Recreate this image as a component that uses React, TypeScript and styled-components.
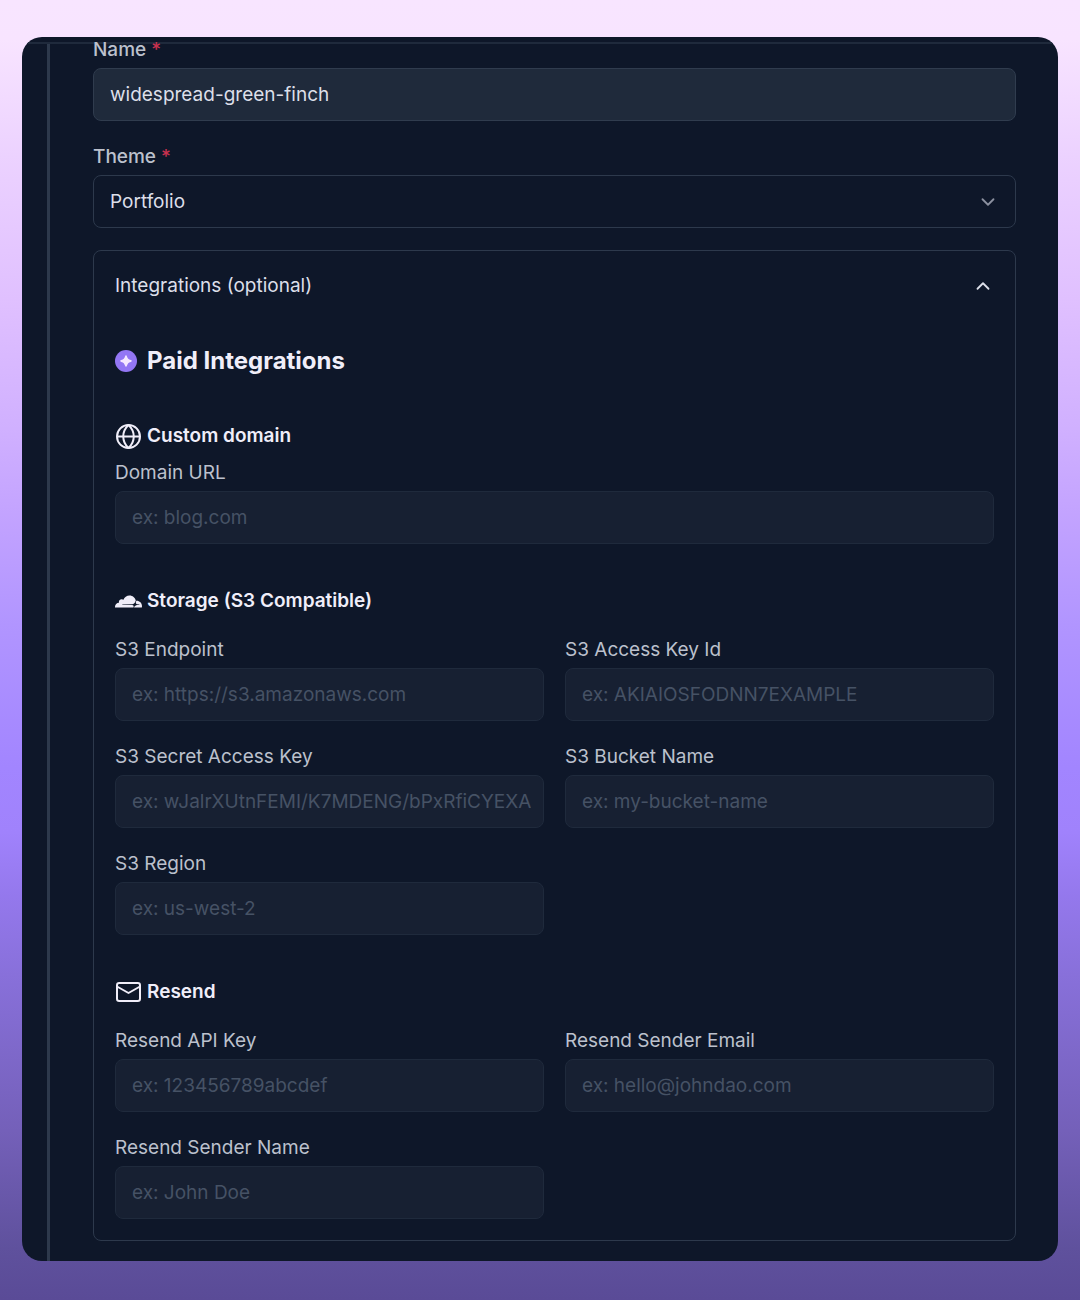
import React, { useId, useState } from "react";
import styled, { createGlobalStyle } from "styled-components";
import { ChevronDown, ChevronUp } from "lucide-react";
import { SiCloudflare } from "react-icons/si";

const color = {
  surface: "#0e1729",
  line: "#2d394c",
  field: "#1f2a3b",
  fieldMuted: "#172032",
  lineMuted: "#1f2a3c",
  heading: "#f0eef9",
  text: "#dcdfe9",
  label: "#bcc1cd",
  placeholder: "#465265",
  required: "#c9314f",
};

const GlobalStyle = createGlobalStyle`
  *, *::before, *::after { box-sizing: border-box; }
  body { margin: 0; }
  button, input, select { font: inherit; color: inherit; }
`;

const Page = styled.div`
  min-height: 100vh;
  padding: 37px 22px 39px;
  display: flex;
  background: linear-gradient(
    to bottom,
    #f8e5ff 0%,
    #f8e4ff 3%,
    #ecd2ff 12%,
    #e0c0ff 23%,
    #d0b0ff 33%,
    #c4a4ff 39%,
    #b195ff 48%,
    #a285ff 59%,
    #a082fc 64%,
    #9478ec 69%,
    #8870da 75%,
    #7460b9 87%,
    #5f519d 96%,
    #5a4b97 100%
  );
  font-family: Inter, "Liberation Sans", sans-serif;
  font-size: 19px;
  line-height: 28px;
  color: ${color.text};
`;

const Window = styled.main`
  flex: 1;
  min-width: 0;
  display: flex;
  flex-direction: column;
  padding-top: 5px;
  border-radius: 20px;
  overflow: hidden;
  background: ${color.surface};
`;

const Viewport = styled.div`
  flex: 1;
  display: flex;
  border-top: 2px solid ${color.lineMuted};
`;

const Form = styled.form`
  flex: 1;
  min-width: 0;
  margin-left: 25px;
  padding: 0 42px 20px 43px;
  border-left: 3px solid ${color.line};
`;

const ScrolledFields = styled.div`
  display: flex;
  flex-direction: column;
  gap: 22px;
  margin-top: -8px;
`;

const FieldBox = styled.div`
  display: flex;
  flex-direction: column;
  gap: 4px;
  min-width: 0;
`;

const Label = styled.label<{ $strong?: boolean }>`
  color: ${color.label};
  font-weight: ${(p) => (p.$strong ? 500 : 400)};
`;

const Required = styled.span`
  color: ${color.required};
`;

const TextInput = styled.input<{ $filled?: boolean }>`
  width: 100%;
  height: 53px;
  padding: 0 12px 0 16px;
  border: 1px solid ${(p) => (p.$filled ? "#303c4e" : color.lineMuted)};
  border-radius: 8px;
  background: ${(p) => (p.$filled ? color.field : color.fieldMuted)};
  color: ${color.text};
  outline: none;
  &::placeholder {
    color: ${color.placeholder};
    opacity: 1;
  }
`;

const SelectBox = styled.div`
  display: grid;
  align-items: center;
  > * {
    grid-area: 1 / 1;
  }
  > svg {
    justify-self: end;
    margin-right: 17px;
    color: #8b909f;
    pointer-events: none;
  }
`;

const Select = styled.select`
  appearance: none;
  width: 100%;
  height: 53px;
  padding: 0 16px;
  border: 1px solid ${color.line};
  border-radius: 8px;
  background: transparent;
  outline: none;
`;

const Panel = styled.section`
  padding: 21px;
  border: 1px solid ${color.line};
  border-radius: 8px;
`;

const PanelToggle = styled.button`
  display: flex;
  width: 100%;
  align-items: center;
  justify-content: space-between;
  padding: 0;
  border: 0;
  background: none;
  text-align: left;
  cursor: pointer;
`;

const PanelTitle = styled.h2`
  display: flex;
  align-items: center;
  gap: 10px;
  margin: 43px 0 0;
  font-size: 24px;
  line-height: 36px;
  font-weight: 700;
  color: ${color.heading};
`;

const Group = styled.section<{ $gap: number }>`
  display: flex;
  flex-direction: column;
  gap: ${(p) => p.$gap}px;
  margin-top: 43px;
`;

const GroupTitle = styled.h3`
  display: flex;
  align-items: center;
  gap: 5px;
  margin: 0;
  font-size: 19px;
  line-height: 28px;
  font-weight: 600;
  color: ${color.heading};
`;

const Columns = styled.div`
  display: grid;
  grid-template-columns: repeat(2, minmax(0, 1fr));
  gap: 22px 21px;
`;

const SparkleBadge = () => (
  <svg width="22" height="22" viewBox="0 0 22 22" aria-hidden="true">
    <circle cx="11" cy="11" r="11" fill="#9376f4" />
    <path
      d="M11 5.2c.5 0 .7.4.9 1 .8 2.4 1.400 3.100 3.900 3.900.6.2 1 .4 1 .9s-.4.7-1 .9c-2.500.8-3.100 1.500-3.900 3.900-.2.6-.4 1-.9 1s-.7-.4-.9-1c-.8-2.400-1.400-3.100-3.900-3.900-.6-.2-1-.4-1-.9s.4-.7 1-.9c2.500-.8 3.100-1.500 3.900-3.900.2-.6.4-1 .9-1z"
      fill="#f6e8ff"
    />
  </svg>
);

const GlobeIcon = () => (
  <svg width="27" height="27" viewBox="0 0 27 27" fill="none" stroke="currentColor" strokeWidth="2" aria-hidden="true">
    <circle cx="13.5" cy="13.5" r="11.5" />
    <path d="M13.5 2c-7 6.500-7 16.500 0 23M13.500 2c7 6.500 7 16.500 0 23" />
    <path d="M2 13.500h23" />
  </svg>
);

const MailIcon = () => (
  <svg width="27" height="27" viewBox="0 0 27 27" fill="none" stroke="currentColor" strokeWidth="2" strokeLinejoin="round" aria-hidden="true">
    <rect x="2" y="4" width="23" height="18" rx="2.2" />
    <path d="M2 7.500l11.500 6.500L25 7.500" />
  </svg>
);

interface FieldProps {
  label: string;
  placeholder?: string;
  value?: string;
  required?: boolean;
}

function Field({ label, placeholder, value, required }: FieldProps) {
  const id = useId();
  return (
    <FieldBox>
      <Label htmlFor={id} $strong={required}>
        {label}
        {required && <Required> *</Required>}
      </Label>
      <TextInput id={id} type="text" placeholder={placeholder} defaultValue={value} $filled={value !== undefined} />
    </FieldBox>
  );
}

const storageFields: FieldProps[] = [
  { label: "S3 Endpoint", placeholder: "ex: https://s3.amazonaws.com" },
  { label: "S3 Access Key Id", placeholder: "ex: AKIAIOSFODNN7EXAMPLE" },
  { label: "S3 Secret Access Key", placeholder: "ex: wJalrXUtnFEMI/K7MDENG/bPxRfiCYEXA" },
  { label: "S3 Bucket Name", placeholder: "ex: my-bucket-name" },
  { label: "S3 Region", placeholder: "ex: us-west-2" },
];

const resendFields: FieldProps[] = [
  { label: "Resend API Key", placeholder: "ex: 123456789abcdef" },
  { label: "Resend Sender Email", placeholder: "ex: hello@johndao.com" },
  { label: "Resend Sender Name", placeholder: "ex: John Doe" },
];

export default function App() {
  const [open, setOpen] = useState(true);
  const themeId = useId();
  return (
    <>
      <GlobalStyle />
      <Page>
        <Window>
          <Viewport>
            <Form onSubmit={(e) => e.preventDefault()}>
              <ScrolledFields>
                <Field label="Name" value="widespread-green-finch" required />
                <FieldBox>
                  <Label htmlFor={themeId} $strong>
                    Theme<Required> *</Required>
                  </Label>
                  <SelectBox>
                    <Select id={themeId} defaultValue="Portfolio">
                      <option>Portfolio</option>
                    </Select>
                    <ChevronDown size={22} />
                  </SelectBox>
                </FieldBox>
                <Panel>
                  <PanelToggle type="button" aria-expanded={open} onClick={() => setOpen(!open)}>
                    Integrations (optional)
                    {open ? <ChevronUp size={22} /> : <ChevronDown size={22} />}
                  </PanelToggle>
                  {open && (
                    <>
                      <PanelTitle>
                        <SparkleBadge />
                        Paid Integrations
                      </PanelTitle>
                      <Group $gap={9}>
                        <GroupTitle>
                          <GlobeIcon />
                          Custom domain
                        </GroupTitle>
                        <Field label="Domain URL" placeholder="ex: blog.com" />
                      </Group>
                      <Group $gap={21}>
                        <GroupTitle>
                          <SiCloudflare size={27} aria-hidden="true" />
                          Storage (S3 Compatible)
                        </GroupTitle>
                        <Columns>
                          {storageFields.map((f) => (
                            <Field key={f.label} {...f} />
                          ))}
                        </Columns>
                      </Group>
                      <Group $gap={21}>
                        <GroupTitle>
                          <MailIcon />
                          Resend
                        </GroupTitle>
                        <Columns>
                          {resendFields.map((f) => (
                            <Field key={f.label} {...f} />
                          ))}
                        </Columns>
                      </Group>
                    </>
                  )}
                </Panel>
              </ScrolledFields>
            </Form>
          </Viewport>
        </Window>
      </Page>
    </>
  );
}
